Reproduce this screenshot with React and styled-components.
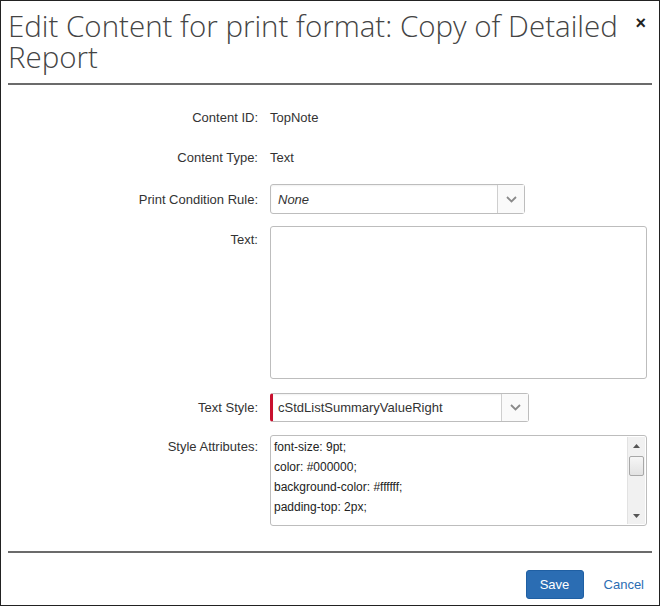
import React from 'react';
import styled, { createGlobalStyle } from 'styled-components';

const Global = createGlobalStyle`
  html, body { margin: 0; padding: 0; background: #fff; }
  body { font-family: 'Liberation Sans', Arial, sans-serif; }
`;

const Dialog = styled.div`
  box-sizing: border-box;
  width: 660px;
  height: 606px;
  border: 1px solid #222;
  background: #fff;
  display: flex;
  flex-direction: column;
  overflow: hidden;
`;

const Header = styled.div`
  position: relative;
  margin: 0 7px;
  padding: 9px 26px 11px 0;
  border-bottom: 2px solid #6b6b6b;
`;

const Title = styled.h1`
  margin: 0;
  font-family: 'Open Sans', sans-serif;
  font-weight: 300;
  font-size: 29.5px;
  line-height: 31px;
  color: #444;
`;

const Close = styled.button`
  position: absolute;
  top: 13px;
  right: 6px;
  border: none;
  background: none;
  padding: 0;
  font-family: 'Liberation Sans', Arial, sans-serif;
  font-size: 18px;
  font-weight: bold;
  color: #222;
  line-height: 18px;
`;

const Body = styled.div`
  flex: 1;
  padding: 22px 12px 0 0;
  display: flex;
  flex-direction: column;
`;

const Row = styled.div`
  display: grid;
  grid-template-columns: 257px 1fr;
  column-gap: 12px;
  align-items: ${(p) => (p.$top ? 'start' : 'center')};
  min-height: ${(p) => p.$h || 'auto'};
  margin-bottom: ${(p) => p.$mb || '0'};
`;

const Label = styled.label`
  text-align: right;
  font-size: 13px;
  color: #333;
  padding-top: ${(p) => p.$pt || '0'};
`;

const Value = styled.div`
  font-size: 13px;
  color: #333;
`;

const Select = styled.div`
  box-sizing: border-box;
  width: ${(p) => p.$w};
  height: ${(p) => p.$h};
  display: flex;
  border: 1px solid #bdbdbd;
  border-left: ${(p) => (p.$invalid ? '3px solid #c8102e' : '1px solid #bdbdbd')};
  border-radius: 3px;
  background: #fff;
  box-shadow: inset 0 1px 2px rgba(0, 0, 0, 0.06);
`;

const SelectText = styled.div`
  flex: 1;
  display: flex;
  align-items: center;
  padding-left: ${(p) => (p.$invalid ? '5px' : '7px')};
  font-size: 13px;
  color: #333;
  font-style: ${(p) => (p.$italic ? 'italic' : 'normal')};
`;

const Arrow = styled.div`
  width: 26px;
  border-left: 1px solid #cfcfcf;
  display: flex;
  align-items: center;
  justify-content: center;
  background: #fafafa;
`;

const TextArea = styled.div`
  box-sizing: border-box;
  width: 377px;
  height: ${(p) => p.$h};
  border: 1px solid #bdbdbd;
  border-radius: 3px;
  background: #fff;
  display: flex;
`;

const Lines = styled.div`
  flex: 1;
  padding: 1px 3px;
  font-size: 12px;
  line-height: 20px;
  color: #222;
`;

const Scrollbar = styled.div`
  box-sizing: border-box;
  width: 18px;
  margin: 1px 1px 1px 0;
  display: flex;
  flex-direction: column;
  align-items: center;
  background: #f1f1f1;
  border-left: 1px solid #e2e2e2;
`;

const ScrollBtn = styled.div`
  width: 17px;
  height: 17px;
  display: flex;
  align-items: center;
  justify-content: center;
`;

const Thumb = styled.div`
  box-sizing: border-box;
  width: 15px;
  height: 20px;
  margin-top: 2px;
  border: 1px solid #a8a8a8;
  border-radius: 2px;
  background: linear-gradient(#f6f6f6, #e2e2e2);
`;

const Track = styled.div`
  flex: 1;
`;

const Footer = styled.div`
  margin: 0 7px;
  border-top: 2px solid #6b6b6b;
  padding: 17px 8px 6px 0;
  display: flex;
  justify-content: flex-end;
  align-items: center;
  gap: 20px;
`;

const SaveButton = styled.button`
  width: 58px;
  height: 29px;
  border: 1px solid #1f5fa3;
  border-radius: 3px;
  background: #2b6db3;
  color: #fff;
  font-family: 'Liberation Sans', Arial, sans-serif;
  font-size: 13px;
`;

const CancelLink = styled.a`
  font-size: 13px;
  color: #2b6db3;
  text-decoration: none;
`;

const Chevron = () => (
  <svg width="11" height="7" viewBox="0 0 11 7">
    <path d="M1 1l4.5 4.5L10 1" fill="none" stroke="#8a8a8a" strokeWidth="1.8" />
  </svg>
);

const Tri = ({ up }) => (
  <svg width="7" height="4" viewBox="0 0 7 4">
    <path d={up ? 'M0 4L3.5 0L7 4z' : 'M0 0L3.5 4L7 0z'} fill="#555" />
  </svg>
);

export default function App() {
  return (
    <>
      <Global />
      <Dialog>
        <Header>
          <Title>Edit Content for print format: Copy of Detailed Report</Title>
          <Close>×</Close>
        </Header>
        <Body>
          <Row $h="20px" $mb="20px">
            <Label>Content ID:</Label>
            <Value>TopNote</Value>
          </Row>
          <Row $h="20px" $mb="17px">
            <Label>Content Type:</Label>
            <Value>Text</Value>
          </Row>
          <Row $mb="12px">
            <Label>Print Condition Rule:</Label>
            <Select $w="255px" $h="30px">
              <SelectText $italic>None</SelectText>
              <Arrow>
                <Chevron />
              </Arrow>
            </Select>
          </Row>
          <Row $top $mb="14px">
            <Label $pt="6px">Text:</Label>
            <TextArea $h="153px" />
          </Row>
          <Row $mb="13px">
            <Label>Text Style:</Label>
            <Select $w="259px" $h="29px" $invalid>
              <SelectText $invalid>cStdListSummaryValueRight</SelectText>
              <Arrow>
                <Chevron />
              </Arrow>
            </Select>
          </Row>
          <Row $top>
            <Label $pt="4px">Style Attributes:</Label>
            <TextArea $h="91px">
              <Lines>
                font-size: 9pt;
                <br />
                color: #000000;
                <br />
                background-color: #ffffff;
                <br />
                padding-top: 2px;
              </Lines>
              <Scrollbar>
                <ScrollBtn>
                  <Tri up />
                </ScrollBtn>
                <Thumb />
                <Track />
                <ScrollBtn>
                  <Tri />
                </ScrollBtn>
              </Scrollbar>
            </TextArea>
          </Row>
        </Body>
        <Footer>
          <SaveButton>Save</SaveButton>
          <CancelLink href="#">Cancel</CancelLink>
        </Footer>
      </Dialog>
    </>
  );
}
